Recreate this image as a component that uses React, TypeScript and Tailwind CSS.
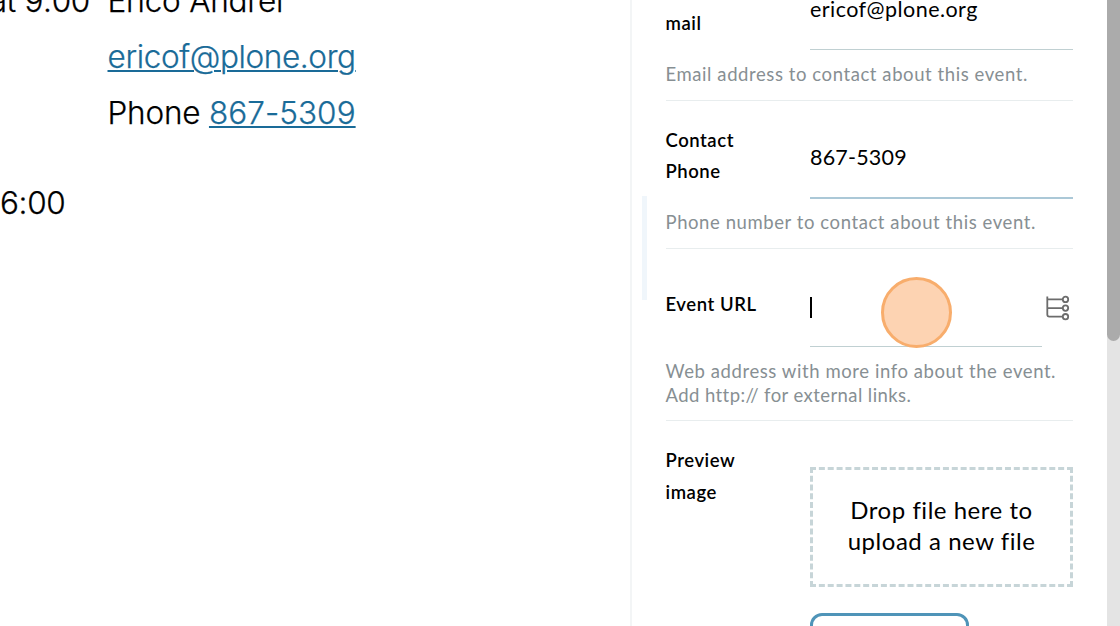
import type { ReactNode } from "react";

function Label({ children }: { children: ReactNode }) {
  return (
    <label className="w-[144.5px] shrink-0 text-[18.5px] leading-[31.5px] font-semibold tracking-[0.55px] whitespace-nowrap text-black">
      {children}
    </label>
  );
}

function Help({ children }: { children: ReactNode }) {
  return <p className="text-[18.5px] leading-[24px] tracking-[0.58px] whitespace-nowrap text-[#878f93]">{children}</p>;
}

function TreeIcon() {
  return (
    <svg width="26" height="26" viewBox="0 0 26 26" fill="none" stroke="#6c6c6c" strokeWidth="1.8">
      <path d="M2.3 1.6V19.6Q2.3 21.7 4.4 21.7H18M2.3 4.4H18M2.3 13.1H18" />
      <circle cx="20.5" cy="4.4" r="2.7" />
      <circle cx="20.5" cy="13.1" r="2.7" />
      <circle cx="20.5" cy="21.7" r="2.7" />
    </svg>
  );
}

function EventDetails() {
  return (
    <main className="flex w-[630px] shrink-0 overflow-hidden text-[31.5px] leading-[56px] font-[350] tracking-[-0.3px] whitespace-nowrap text-black [-webkit-text-stroke-width:0.25px] [font-optical-sizing:none]">
      <div className="flex w-[107.5px] shrink-0 flex-col">
        <div className="-mt-[27px] flex h-[56px] w-[90px] justify-end tracking-[-0.3px]">at 9:00</div>
        <div className="mt-[146px] flex h-[56px] w-[65.5px] justify-end">6:00</div>
      </div>
      <div className="-mt-[27px] flex flex-col">
        <div className="h-[56px] tracking-[-0.2px]">Érico Andrei</div>
        <div className="h-[56px]">
          <a className="tracking-[-0.37px] text-[#1a6b98] underline decoration-2 underline-offset-[2px]" href="#mail">ericof@plone.org</a>
        </div>
        <div className="h-[56px] tracking-[-0.2px]">
          Phone <a className="tracking-[0.05px] text-[#1a6b98] underline decoration-2 underline-offset-[2px]" href="#phone">867-5309</a>
        </div>
      </div>
    </main>
  );
}

function Sidebar() {
  return (
    <aside className="flex w-[477px] shrink-0 overflow-hidden border-l-2 border-[#f3f5f6] font-[Lato,sans-serif]">
      <div className="mt-[196px] ml-[10px] h-[104px] w-[5px] shrink-0 bg-[#f0f6fb]" />
      <div className="ml-[18.5px] flex w-[407.5px] shrink-0 flex-col">
        <section className="h-[101px] shrink-0 border-b border-[#e8edee]">
          <div className="flex h-[50px]">
            <Label><span className="block pt-[8px]">mail</span></Label>
            <div className="h-[50px] flex-1 border-b border-[#c0d0d2] text-[21.5px] leading-[18px] tracking-[0.45px]">ericof@plone.org</div>
          </div>
          <div className="pt-[12px]"><Help>Email address to contact about this event.</Help></div>
        </section>
        <section className="h-[148px] shrink-0 border-b border-[#e8edee]">
          <div className="flex h-[98px]">
            <Label><span className="block pt-[24px] leading-[31px]">Contact<br />Phone</span></Label>
            <div className="flex-1 border-b-2 border-[#abc8d7] pt-[41px] text-[21.5px] leading-[31px] tracking-[0.2px]">867-5309</div>
          </div>
          <div className="pt-[11px]"><Help>Phone number to contact about this event.</Help></div>
        </section>
        <section className="h-[172px] shrink-0 border-b border-[#e8edee]">
          <div className="flex h-[98px]">
            <Label><span className="block pt-[40px]">Event URL</span></Label>
            <div className="relative h-[98px] w-[231.5px] border-b border-[#c0d0d2] pt-[48px]">
              <div className="h-[21px] w-[1.5px] bg-black" />
              <div className="absolute top-[27.5px] left-[70.5px] size-[71px] rounded-full border-[3px] border-[#f8ad6c] bg-[#fdd3b2]" />
            </div>
            <div className="pt-[46px] pl-[3px]"><TreeIcon /></div>
          </div>
          <div className="pt-[12px]"><Help>Web address with more info about the event.<br /><span className="tracking-[0.42px]">Add http:// for external links.</span></Help></div>
        </section>
        <section className="flex shrink-0">
          <Label><span className="block pt-[24px]">Preview<br />image</span></Label>
          <div className="flex flex-1 flex-col pt-[46px]">
            <div className="flex h-[120px] flex-col items-center border-[3px] border-dashed border-[#c7d5d8] pt-[24px] text-[24px] leading-[31px] tracking-[0.53px] whitespace-nowrap">
              <span>Drop file here to</span>
              <span>upload a new file</span>
            </div>
            <button className="mt-[26px] h-[50px] w-[159px] rounded-[12px] border-[3px] border-[#4f94b8]" aria-label="Browse" />
          </div>
        </section>
      </div>
    </aside>
  );
}

export default function App() {
  return (
    <div className="flex h-[626px] w-[1120px] overflow-hidden bg-white font-[Inter,sans-serif] text-black">
      <EventDetails />
      <Sidebar />
      <div className="w-[13px] shrink-0 bg-[#e4e4e4]">
        <div className="h-[341px] rounded-b-full bg-[#ababab]" />
      </div>
    </div>
  );
}
